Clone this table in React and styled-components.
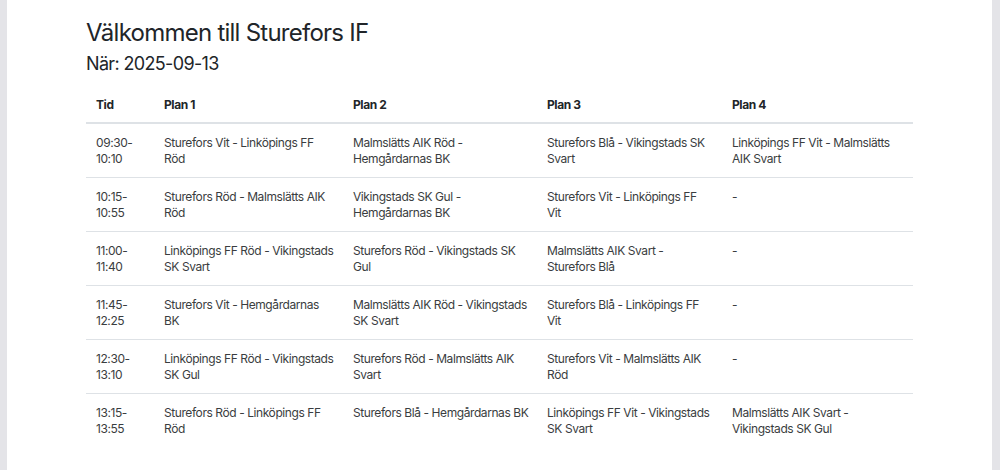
import React from 'react';
import styled, { createGlobalStyle } from 'styled-components';

const GlobalStyle = createGlobalStyle`
  html, body {
    margin: 0;
    padding: 0;
    background: #ffffff;
  }
  body {
    font-family: Inter, "Noto Sans", "Liberation Sans", sans-serif;
    color: #212529;
  }
`;

const Frame = styled.div`
  height: 470px;
  box-sizing: border-box;
  border-left: 7px solid #e4e4e8;
  border-right: 8px solid #e4e4e8;
  background: #ffffff;
  overflow: hidden;
`;

const Page = styled.div`
  padding: 18px 80px 0 79px;
`;

const Title = styled.h1`
  margin: 0;
  font-size: 24px;
  font-weight: 400;
  line-height: 30px;
  letter-spacing: -0.75px;
`;

const When = styled.h2`
  margin: 4px 0 0;
  font-size: 18px;
  font-weight: 400;
  line-height: 24px;
  letter-spacing: -0.65px;
`;

const Table = styled.table`
  margin-top: 11px;
  width: 827px;
  border-collapse: collapse;
  font-size: 12px;
  line-height: 16px;
  letter-spacing: -0.42px;
  table-layout: fixed;
`;

const Th = styled.th`
  text-align: left;
  font-weight: 700;
  padding: 10px 10px 9px;
  border-bottom: 2px solid #dee2e6;
`;

const Td = styled.td`
  vertical-align: top;
  padding: 11px 10px 10px;
  color: #3a3d40;
  white-space: nowrap;
  border-bottom: ${p => (p.$last ? 'none' : '1px solid #dee2e6')};
`;

const Line = styled.span`
  display: block;
`;

const columns = [68, 189, 194, 185, 191];

// each cell split into the lines it wraps to in the schedule
const schedule = [
  [['09:30-', '10:10'], ['Sturefors Vit - Linköpings FF', 'Röd'], ['Malmslätts AIK Röd -', 'Hemgårdarnas BK'], ['Sturefors Blå - Vikingstads SK', 'Svart'], ['Linköpings FF Vit - Malmslätts', 'AIK Svart']],
  [['10:15-', '10:55'], ['Sturefors Röd - Malmslätts AIK', 'Röd'], ['Vikingstads SK Gul -', 'Hemgårdarnas BK'], ['Sturefors Vit - Linköpings FF', 'Vit'], ['-']],
  [['11:00-', '11:40'], ['Linköpings FF Röd - Vikingstads', 'SK Svart'], ['Sturefors Röd - Vikingstads SK', 'Gul'], ['Malmslätts AIK Svart -', 'Sturefors Blå'], ['-']],
  [['11:45-', '12:25'], ['Sturefors Vit - Hemgårdarnas', 'BK'], ['Malmslätts AIK Röd - Vikingstads', 'SK Svart'], ['Sturefors Blå - Linköpings FF', 'Vit'], ['-']],
  [['12:30-', '13:10'], ['Linköpings FF Röd - Vikingstads', 'SK Gul'], ['Sturefors Röd - Malmslätts AIK', 'Svart'], ['Sturefors Vit - Malmslätts AIK', 'Röd'], ['-']],
  [['13:15-', '13:55'], ['Sturefors Röd - Linköpings FF', 'Röd'], ['Sturefors Blå - Hemgårdarnas BK'], ['Linköpings FF Vit - Vikingstads', 'SK Svart'], ['Malmslätts AIK Svart -', 'Vikingstads SK Gul']],
];

export default function App() {
  return (
    <Frame>
      <GlobalStyle />
      <Page>
        <Title>Välkommen till Sturefors IF</Title>
        <When>När: 2025-09-13</When>
        <Table>
          <colgroup>
            {columns.map((w, i) => (
              <col key={i} style={{ width: w }} />
            ))}
          </colgroup>
          <thead>
            <tr>
              <Th>Tid</Th>
              <Th>Plan 1</Th>
              <Th>Plan 2</Th>
              <Th>Plan 3</Th>
              <Th>Plan 4</Th>
            </tr>
          </thead>
          <tbody>
            {schedule.map((row, r) => (
              <tr key={r}>
                {row.map((cell, c) => (
                  <Td key={c} $last={r === schedule.length - 1}>
                    {cell.map((text, i) => (
                      <Line key={i}>{text}</Line>
                    ))}
                  </Td>
                ))}
              </tr>
            ))}
          </tbody>
        </Table>
      </Page>
    </Frame>
  );
}
